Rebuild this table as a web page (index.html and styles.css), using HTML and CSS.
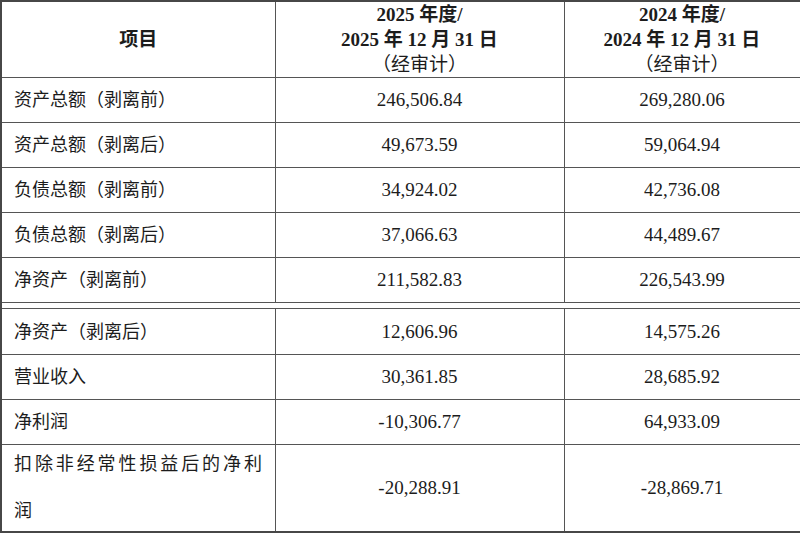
FILE: index.html
```html
<!DOCTYPE html>
<html lang="zh-CN">
<head>
<meta charset="utf-8">
<title>财务数据</title>
<link rel="stylesheet" href="styles.css">
</head>
<body>
<table class="fin">
  <colgroup>
    <col class="c-item">
    <col class="c-y1">
    <col class="c-y2">
  </colgroup>
  <thead>
    <tr class="head">
      <th class="label-head">项目</th>
      <th>2025 年度/<br>2025 年 12 月 31 日<br><span class="audit">（经审计）</span></th>
      <th>2024 年度/<br>2024 年 12 月 31 日<br><span class="audit">（经审计）</span></th>
    </tr>
  </thead>
  <tbody>
    <tr class="row"><td class="label">资产总额（剥离前）</td><td class="num">246,506.84</td><td class="num">269,280.06</td></tr>
    <tr class="row"><td class="label">资产总额（剥离后）</td><td class="num">49,673.59</td><td class="num">59,064.94</td></tr>
    <tr class="row"><td class="label">负债总额（剥离前）</td><td class="num">34,924.02</td><td class="num">42,736.08</td></tr>
    <tr class="row"><td class="label">负债总额（剥离后）</td><td class="num">37,066.63</td><td class="num">44,489.67</td></tr>
    <tr class="row"><td class="label">净资产（剥离前）</td><td class="num">211,582.83</td><td class="num">226,543.99</td></tr>
    <tr class="gap"><td colspan="3"></td></tr>
    <tr class="row row-first"><td class="label">净资产（剥离后）</td><td class="num">12,606.96</td><td class="num">14,575.26</td></tr>
    <tr class="row"><td class="label">营业收入</td><td class="num">30,361.85</td><td class="num">28,685.92</td></tr>
    <tr class="row"><td class="label">净利润</td><td class="num">-10,306.77</td><td class="num">64,933.09</td></tr>
    <tr class="row-tall"><td class="label"><div class="wrap">扣除非经常性损益后的净利润</div></td><td class="num">-20,288.91</td><td class="num">-28,869.71</td></tr>
  </tbody>
</table>
</body>
</html>
```

FILE: styles.css
```css
html, body {
  margin: 0;
  padding: 0;
  background: #ffffff;
}

.fin {
  width: 800px;
  border-collapse: collapse;
  table-layout: fixed;
  font-family: "Liberation Serif", "Noto Sans CJK SC", serif;
  font-size: 19px;
  color: #1c1c1c;
  border: 2px solid #474747;
}

.c-item { width: 274px; }
.c-y1 { width: 289px; }
.c-y2 { width: 237px; }

.fin th,
.fin td {
  border: 1px solid #555555;
  padding: 0;
  vertical-align: middle;
}

.fin tr > :first-child { border-left: 2px solid #474747; }
.fin tr > :last-child { border-right: 3px solid #474747; }

.fin .head th {
  height: 75px;
  font-weight: bold;
  line-height: 25px;
  text-align: center;
}

.head .audit {
  font-weight: normal;
}

.fin .row td {
  height: 44px;
  line-height: 24px;
}

.fin .row-first td {
  height: 45px;
}

.fin .gap td {
  height: 5px;
  padding: 0;
  border-left: 2px solid #474747;
  border-right: 3px solid #474747;
}

.fin .label {
  text-align: left;
  padding-left: 12px;
  padding-right: 8px;
  font-size: 18px;
}

.fin .num {
  text-align: center;
}

.fin .row-tall td {
  height: 86px;
  border-bottom: 2px solid #474747;
}

.wrap {
  letter-spacing: 2.9px;
  line-height: 47px;
  margin: -6px 0;
}
```
